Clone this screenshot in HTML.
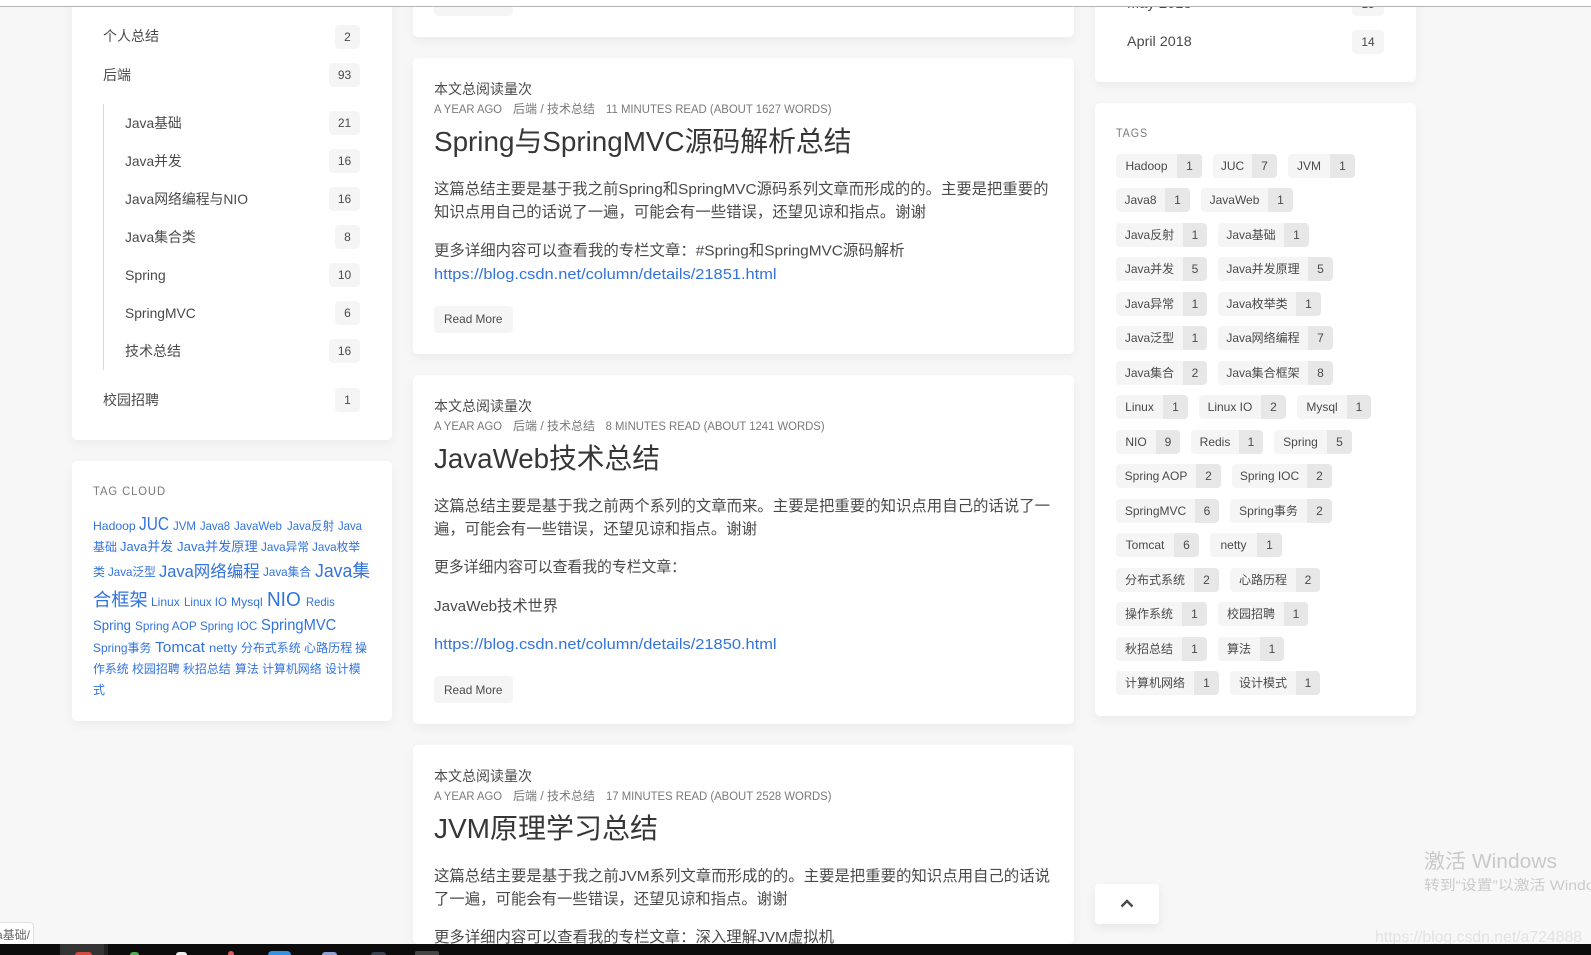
<!DOCTYPE html>
<html lang="zh">
<head>
<meta charset="utf-8">
<title>Blog</title>
<style>
html,body{margin:0;padding:0;width:1591px;height:955px;overflow:hidden;background:#f7f7f7}
body{position:relative;font-family:"Liberation Sans","Noto Sans CJK SC",sans-serif;color:#4a4a4a}
.card{position:absolute;background:#fff;border-radius:5px;box-shadow:0 4px 10px rgba(0,0,0,.05)}
.bd{position:absolute;background:#f5f5f5;border-radius:4px;height:24px;line-height:24px;text-align:center;font-size:12px;color:#4a4a4a}
.btn{position:absolute;left:434px;width:79px;height:27px;background:#f5f5f5;border-radius:4px}
.tg{position:absolute;display:flex;height:24px;line-height:24px;font-size:12px;color:#4a4a4a;border-radius:4px;overflow:hidden}
.tg b{font-weight:400;background:#f5f5f5;text-align:center;white-space:nowrap}
.tg i{font-style:normal;background:#e7e7e7;text-align:center}
#ov{position:absolute;left:0;top:0}
#ov text{font-family:"Liberation Sans","Noto Sans CJK SC",sans-serif;fill:#4a4a4a;font-size:15.2px}
#ov .s{font-size:14px}
#ov .m{font-size:12.2px;fill:#7a7a7a}
#ov .h{font-size:28px;fill:#363636}
#ov .l{fill:#3273dc}
#ov .r{font-size:12px}
#ov .c text{fill:#3273dc;font-size:12px}
#ov .g{font-size:12px;fill:#7a7a7a;letter-spacing:1px}
.hd{position:absolute;left:0;top:0;width:1591px;height:6px;background:#fff;border-bottom:1px solid #b4b4b4}
.tb{position:absolute;left:0;top:944px;width:1591px;height:11px;background:#0c0c0c;overflow:hidden}
.tb div{position:absolute}
.tip{position:absolute;left:-1px;top:922px;width:33px;height:22px;background:#fff;border:1px solid #e0e0e0;border-bottom:0;border-radius:0 4px 0 0;font-size:12px;line-height:24px;color:#666;overflow:hidden;white-space:nowrap}
.top{position:absolute;left:1095px;top:884px;width:64px;height:40px;background:#fff;border-radius:4px;box-shadow:0 4px 10px rgba(0,0,0,.07)}
</style>
</head>
<body>
<div class="card" style="left:72px;top:-20px;width:320px;height:460px"></div>
<div class="card" style="left:72px;top:461px;width:320px;height:260px"></div>
<div class="card" style="left:413px;top:-40px;width:661px;height:77px"></div>
<div class="card" style="left:413px;top:58px;width:661px;height:296px"></div>
<div class="card" style="left:413px;top:375px;width:661px;height:349px"></div>
<div class="card" style="left:413px;top:745px;width:661px;height:199px"></div>
<div class="card" style="left:1095px;top:-20px;width:321px;height:102px"></div>
<div class="card" style="left:1095px;top:103px;width:321px;height:613px"></div>

<div style="position:absolute;left:103px;top:104px;width:1px;height:266px;background:#dbdbdb"></div>

<div class="bd" style="left:335px;top:25px;width:25px">2</div>
<div class="bd" style="left:329px;top:63px;width:31px">93</div>
<div class="bd" style="left:329px;top:111px;width:31px">21</div>
<div class="bd" style="left:329px;top:149px;width:31px">16</div>
<div class="bd" style="left:329px;top:187px;width:31px">16</div>
<div class="bd" style="left:335px;top:225px;width:25px">8</div>
<div class="bd" style="left:329px;top:263px;width:31px">10</div>
<div class="bd" style="left:335px;top:301px;width:25px">6</div>
<div class="bd" style="left:329px;top:339px;width:31px">16</div>
<div class="bd" style="left:335px;top:388px;width:25px">1</div>
<div class="bd" style="left:1352px;top:-8px;width:32px">15</div>
<div class="bd" style="left:1352px;top:30px;width:32px">14</div>

<div class="btn" style="top:-11px"></div>
<div class="btn" style="top:306px"></div>
<div class="btn" style="top:676px"></div>

<div class="tg" style="left:1116px;top:154px"><b style="width:61px">Hadoop</b><i style="width:25px">1</i></div>
<div class="tg" style="left:1213px;top:154px"><b style="width:39px">JUC</b><i style="width:25px">7</i></div>
<div class="tg" style="left:1288px;top:154px"><b style="width:42px">JVM</b><i style="width:25px">1</i></div>
<div class="tg" style="left:1116px;top:188px"><b style="width:49px">Java8</b><i style="width:25px">1</i></div>
<div class="tg" style="left:1201px;top:188px"><b style="width:67px">JavaWeb</b><i style="width:25px">1</i></div>
<div class="tg" style="left:1116px;top:223px"><b style="width:67px">Java反射</b><i style="width:24px">1</i></div>
<div class="tg" style="left:1218px;top:223px"><b style="width:66px">Java基础</b><i style="width:25px">1</i></div>
<div class="tg" style="left:1116px;top:257px"><b style="width:67px">Java并发</b><i style="width:24px">5</i></div>
<div class="tg" style="left:1218px;top:257px"><b style="width:90px">Java并发原理</b><i style="width:25px">5</i></div>
<div class="tg" style="left:1116px;top:292px"><b style="width:67px">Java异常</b><i style="width:24px">1</i></div>
<div class="tg" style="left:1218px;top:292px"><b style="width:78px">Java枚举类</b><i style="width:25px">1</i></div>
<div class="tg" style="left:1116px;top:326px"><b style="width:67px">Java泛型</b><i style="width:24px">1</i></div>
<div class="tg" style="left:1218px;top:326px"><b style="width:90px">Java网络编程</b><i style="width:25px">7</i></div>
<div class="tg" style="left:1116px;top:361px"><b style="width:67px">Java集合</b><i style="width:24px">2</i></div>
<div class="tg" style="left:1218px;top:361px"><b style="width:90px">Java集合框架</b><i style="width:25px">8</i></div>
<div class="tg" style="left:1116px;top:395px"><b style="width:47px">Linux</b><i style="width:25px">1</i></div>
<div class="tg" style="left:1199px;top:395px"><b style="width:62px">Linux IO</b><i style="width:25px">2</i></div>
<div class="tg" style="left:1297px;top:395px"><b style="width:50px">Mysql</b><i style="width:24px">1</i></div>
<div class="tg" style="left:1116px;top:430px"><b style="width:40px">NIO</b><i style="width:24px">9</i></div>
<div class="tg" style="left:1191px;top:430px"><b style="width:48px">Redis</b><i style="width:24px">1</i></div>
<div class="tg" style="left:1274px;top:430px"><b style="width:53px">Spring</b><i style="width:25px">5</i></div>
<div class="tg" style="left:1116px;top:464px"><b style="width:80px">Spring AOP</b><i style="width:25px">2</i></div>
<div class="tg" style="left:1232px;top:464px"><b style="width:75px">Spring IOC</b><i style="width:25px">2</i></div>
<div class="tg" style="left:1116px;top:499px"><b style="width:79px">SpringMVC</b><i style="width:24px">6</i></div>
<div class="tg" style="left:1230px;top:499px"><b style="width:77px">Spring事务</b><i style="width:25px">2</i></div>
<div class="tg" style="left:1116px;top:533px"><b style="width:58px">Tomcat</b><i style="width:25px">6</i></div>
<div class="tg" style="left:1210px;top:533px"><b style="width:47px">netty</b><i style="width:25px">1</i></div>
<div class="tg" style="left:1116px;top:568px"><b style="width:78px">分布式系统</b><i style="width:25px">2</i></div>
<div class="tg" style="left:1230px;top:568px"><b style="width:66px">心路历程</b><i style="width:24px">2</i></div>
<div class="tg" style="left:1116px;top:602px"><b style="width:66px">操作系统</b><i style="width:25px">1</i></div>
<div class="tg" style="left:1218px;top:602px"><b style="width:66px">校园招聘</b><i style="width:24px">1</i></div>
<div class="tg" style="left:1116px;top:637px"><b style="width:66px">秋招总结</b><i style="width:25px">1</i></div>
<div class="tg" style="left:1218px;top:637px"><b style="width:42px">算法</b><i style="width:24px">1</i></div>
<div class="tg" style="left:1116px;top:671px"><b style="width:78px">计算机网络</b><i style="width:25px">1</i></div>
<div class="tg" style="left:1230px;top:671px"><b style="width:66px">设计模式</b><i style="width:24px">1</i></div>

<div class="top"><svg width="64" height="40" style="display:block"><path d="M26.5 22.5 32 17l5.500 5.500" fill="none" stroke="#4a4a4a" stroke-width="2.500"/></svg></div>

<svg id="ov" width="1591" height="955" xmlns="http://www.w3.org/2000/svg">
<!-- left menu -->
<text class="s" x="103" y="41" textLength="56" lengthAdjust="spacingAndGlyphs">个人总结</text>
<text class="s" x="103" y="80" textLength="28" lengthAdjust="spacingAndGlyphs">后端</text>
<text class="s" x="125" y="128" textLength="56.700" lengthAdjust="spacingAndGlyphs">Java基础</text>
<text class="s" x="125" y="166" textLength="56.700" lengthAdjust="spacingAndGlyphs">Java并发</text>
<text class="s" x="125" y="204" textLength="123" lengthAdjust="spacingAndGlyphs">Java网络编程与NIO</text>
<text class="s" x="125" y="242" textLength="70.700" lengthAdjust="spacingAndGlyphs">Java集合类</text>
<text class="s" x="125" y="280" textLength="40.700" lengthAdjust="spacingAndGlyphs">Spring</text>
<text class="s" x="125" y="318" textLength="70.700" lengthAdjust="spacingAndGlyphs">SpringMVC</text>
<text class="s" x="125" y="356" textLength="56" lengthAdjust="spacingAndGlyphs">技术总结</text>
<text class="s" x="103" y="405" textLength="56" lengthAdjust="spacingAndGlyphs">校园招聘</text>

<!-- tag cloud -->
<text class="g" x="93" y="495" textLength="73" lengthAdjust="spacingAndGlyphs">TAG CLOUD</text>
<g class="c">
<text x="93" y="530" textLength="42.700" lengthAdjust="spacingAndGlyphs">Hadoop</text>
<text x="139" y="530" style="font-size:18px" textLength="30" lengthAdjust="spacingAndGlyphs">JUC</text>
<text x="173" y="530" textLength="23" lengthAdjust="spacingAndGlyphs">JVM</text>
<text x="200" y="530" textLength="30" lengthAdjust="spacingAndGlyphs">Java8</text>
<text x="234" y="530" textLength="48" lengthAdjust="spacingAndGlyphs">JavaWeb</text>
<text x="287" y="530" textLength="47" lengthAdjust="spacingAndGlyphs">Java反射</text>
<text x="338" y="530" textLength="24" lengthAdjust="spacingAndGlyphs">Java</text>
<text x="93" y="551" textLength="24" lengthAdjust="spacingAndGlyphs">基础</text>
<text x="120" y="551" style="font-size:13.300px" textLength="53" lengthAdjust="spacingAndGlyphs">Java并发</text>
<text x="177" y="551" style="font-size:13.300px" textLength="80.700" lengthAdjust="spacingAndGlyphs">Java并发原理</text>
<text x="261" y="551" textLength="48" lengthAdjust="spacingAndGlyphs">Java异常</text>
<text x="312" y="551" textLength="48" lengthAdjust="spacingAndGlyphs">Java枚举</text>
<text x="93" y="576" textLength="12" lengthAdjust="spacingAndGlyphs">类</text>
<text x="108" y="576" textLength="47.700" lengthAdjust="spacingAndGlyphs">Java泛型</text>
<text x="159" y="577" style="font-size:16.400px" textLength="100.700" lengthAdjust="spacingAndGlyphs">Java网络编程</text>
<text x="263" y="576" textLength="48" lengthAdjust="spacingAndGlyphs">Java集合</text>
<text x="315" y="577" style="font-size:18.300px" textLength="55" lengthAdjust="spacingAndGlyphs">Java集</text>
<text x="93" y="606" style="font-size:18.300px" textLength="54.700" lengthAdjust="spacingAndGlyphs">合框架</text>
<text x="151" y="606" textLength="28.700" lengthAdjust="spacingAndGlyphs">Linux</text>
<text x="184" y="606" textLength="43" lengthAdjust="spacingAndGlyphs">Linux IO</text>
<text x="231" y="606" textLength="31.700" lengthAdjust="spacingAndGlyphs">Mysql</text>
<text x="267" y="606" style="font-size:20px" textLength="33.700" lengthAdjust="spacingAndGlyphs">NIO</text>
<text x="306" y="606" textLength="28.700" lengthAdjust="spacingAndGlyphs">Redis</text>
<text x="93" y="630" style="font-size:13.500px" textLength="38" lengthAdjust="spacingAndGlyphs">Spring</text>
<text x="135" y="630" textLength="61.700" lengthAdjust="spacingAndGlyphs">Spring AOP</text>
<text x="200" y="630" textLength="57.300" lengthAdjust="spacingAndGlyphs">Spring IOC</text>
<text x="261" y="630" style="font-size:15.500px" textLength="75.300" lengthAdjust="spacingAndGlyphs">SpringMVC</text>
<text x="93" y="652" textLength="58.300" lengthAdjust="spacingAndGlyphs">Spring事务</text>
<text x="155" y="652" style="font-size:15px" textLength="50" lengthAdjust="spacingAndGlyphs">Tomcat</text>
<text x="209" y="652" textLength="28.300" lengthAdjust="spacingAndGlyphs">netty</text>
<text x="241" y="652" textLength="59.700" lengthAdjust="spacingAndGlyphs">分布式系统</text>
<text x="304" y="652" textLength="48.300" lengthAdjust="spacingAndGlyphs">心路历程</text>
<text x="355" y="652" textLength="12" lengthAdjust="spacingAndGlyphs">操</text>
<text x="93" y="673" textLength="35.700" lengthAdjust="spacingAndGlyphs">作系统</text>
<text x="132" y="673" textLength="47.700" lengthAdjust="spacingAndGlyphs">校园招聘</text>
<text x="183" y="673" textLength="47.700" lengthAdjust="spacingAndGlyphs">秋招总结</text>
<text x="235" y="673" textLength="23.700" lengthAdjust="spacingAndGlyphs">算法</text>
<text x="262" y="673" textLength="59.700" lengthAdjust="spacingAndGlyphs">计算机网络</text>
<text x="325" y="673" textLength="35.700" lengthAdjust="spacingAndGlyphs">设计模</text>
<text x="93" y="694" textLength="12" lengthAdjust="spacingAndGlyphs">式</text>
</g>

<!-- post 2 -->
<text class="s" x="434" y="94" textLength="98" lengthAdjust="spacingAndGlyphs">本文总阅读量次</text>
<text class="m" x="434" y="113" textLength="68" lengthAdjust="spacingAndGlyphs">A YEAR AGO</text>
<text class="m" x="513" y="113" textLength="82" lengthAdjust="spacingAndGlyphs">后端 / 技术总结</text>
<text class="m" x="606" y="113" textLength="225.500" lengthAdjust="spacingAndGlyphs">11 MINUTES READ (ABOUT 1627 WORDS)</text>
<text class="h" x="434" y="151" textLength="417.600" lengthAdjust="spacingAndGlyphs">Spring与SpringMVC源码解析总结</text>
<text x="434" y="194" textLength="614.500" lengthAdjust="spacingAndGlyphs">这篇总结主要是基于我之前Spring和SpringMVC源码系列文章而形成的的。主要是把重要的</text>
<text x="434" y="217" textLength="492" lengthAdjust="spacingAndGlyphs">知识点用自己的话说了一遍，可能会有一些错误，还望见谅和指点。谢谢</text>
<text x="434" y="255.500" textLength="470.500" lengthAdjust="spacingAndGlyphs">更多详细内容可以查看我的专栏文章：#Spring和SpringMVC源码解析</text>
<text class="l" x="434" y="279" textLength="342.600" lengthAdjust="spacingAndGlyphs">https://blog.csdn.net/column/details/21851.html</text>
<text class="r" x="444" y="323" textLength="58.500" lengthAdjust="spacingAndGlyphs">Read More</text>

<!-- post 3 -->
<text class="s" x="434" y="411" textLength="98" lengthAdjust="spacingAndGlyphs">本文总阅读量次</text>
<text class="m" x="434" y="430" textLength="68" lengthAdjust="spacingAndGlyphs">A YEAR AGO</text>
<text class="m" x="513" y="430" textLength="82" lengthAdjust="spacingAndGlyphs">后端 / 技术总结</text>
<text class="m" x="605.600" y="430" textLength="219" lengthAdjust="spacingAndGlyphs">8 MINUTES READ (ABOUT 1241 WORDS)</text>
<text class="h" x="434" y="468" textLength="226" lengthAdjust="spacingAndGlyphs">JavaWeb技术总结</text>
<text x="434" y="511" textLength="616" lengthAdjust="spacingAndGlyphs">这篇总结主要是基于我之前两个系列的文章而来。主要是把重要的知识点用自己的话说了一</text>
<text x="434" y="534" textLength="323" lengthAdjust="spacingAndGlyphs">遍，可能会有一些错误，还望见谅和指点。谢谢</text>
<text x="434" y="572" textLength="252" lengthAdjust="spacingAndGlyphs">更多详细内容可以查看我的专栏文章：</text>
<text x="434" y="611" textLength="124" lengthAdjust="spacingAndGlyphs">JavaWeb技术世界</text>
<text class="l" x="434" y="649" textLength="342.600" lengthAdjust="spacingAndGlyphs">https://blog.csdn.net/column/details/21850.html</text>
<text class="r" x="444" y="694" textLength="58.500" lengthAdjust="spacingAndGlyphs">Read More</text>

<!-- post 4 -->
<text class="s" x="434" y="781" textLength="98" lengthAdjust="spacingAndGlyphs">本文总阅读量次</text>
<text class="m" x="434" y="800" textLength="68" lengthAdjust="spacingAndGlyphs">A YEAR AGO</text>
<text class="m" x="513" y="800" textLength="82" lengthAdjust="spacingAndGlyphs">后端 / 技术总结</text>
<text class="m" x="606" y="800" textLength="225.500" lengthAdjust="spacingAndGlyphs">17 MINUTES READ (ABOUT 2528 WORDS)</text>
<text class="h" x="434" y="838" textLength="224" lengthAdjust="spacingAndGlyphs">JVM原理学习总结</text>
<text x="434" y="881" textLength="616" lengthAdjust="spacingAndGlyphs">这篇总结主要是基于我之前JVM系列文章而形成的的。主要是把重要的知识点用自己的话说</text>
<text x="434" y="904" textLength="353.500" lengthAdjust="spacingAndGlyphs">了一遍，可能会有一些错误，还望见谅和指点。谢谢</text>
<text x="434" y="942" textLength="400" lengthAdjust="spacingAndGlyphs">更多详细内容可以查看我的专栏文章：深入理解JVM虚拟机</text>

<!-- right column -->
<text class="s" x="1127" y="8" textLength="64.700" lengthAdjust="spacingAndGlyphs">May 2018</text>
<text class="s" x="1127" y="46" textLength="64.700" lengthAdjust="spacingAndGlyphs">April 2018</text>
<text class="g" x="1116" y="137" textLength="32" lengthAdjust="spacingAndGlyphs">TAGS</text>

<!-- watermarks -->
<text x="1424" y="868" style="font-size:20px;fill:#c9c9c9" textLength="133" lengthAdjust="spacingAndGlyphs">激活 Windows</text>
<text x="1424" y="890" style="font-size:14px;fill:#cbcbcb" textLength="190" lengthAdjust="spacingAndGlyphs">转到“设置”以激活 Windows</text>
<text x="1375" y="942" style="font-size:16px;fill:#e2e2e2" textLength="207" lengthAdjust="spacingAndGlyphs">https://blog.csdn.net/a724888</text>
</svg>

<div class="tip"><span style="margin-left:-4px">a基础/</span></div>

<div class="hd"></div>

<div class="tb">
<div style="left:60px;top:0;width:44px;height:11px;background:#333"></div>
<div style="left:104px;top:0;width:4px;height:11px;background:#222"></div>
<div style="left:75px;top:8px;width:17px;height:3px;border-radius:9px 9px 0 0;background:#d84a3e"></div>
<div style="left:130px;top:8px;width:9px;height:3px;border-radius:5px 5px 0 0;background:#4caf50"></div>
<div style="left:176px;top:8px;width:11px;height:3px;border-radius:6px 6px 0 0;background:#eee"></div>
<div style="left:228px;top:7px;width:6px;height:4px;border-radius:3px 3px 0 0;background:#e0575e"></div>
<div style="left:268px;top:7px;width:23px;height:4px;border-radius:5px 5px 0 0;background:#2f93ea"></div>
<div style="left:322px;top:8px;width:15px;height:3px;border-radius:8px 8px 0 0;background:#8f9fd8"></div>
<div style="left:371px;top:8px;width:15px;height:3px;border-radius:8px 8px 0 0;background:#37424e"></div>
<div style="left:415px;top:7px;width:24px;height:4px;border-radius:2px 2px 0 0;background:#444"></div>
</div>
</body>
</html>
